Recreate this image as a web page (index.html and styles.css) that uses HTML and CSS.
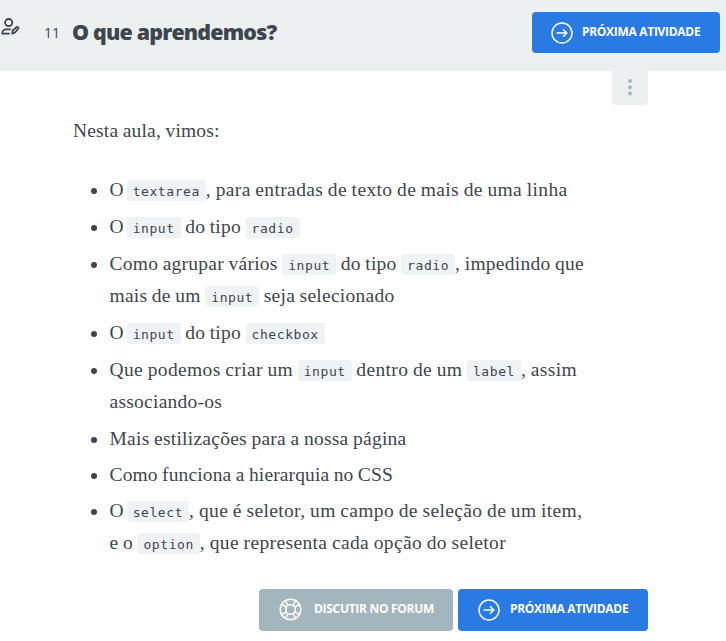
FILE: index.html
```html
<!DOCTYPE html>
<html lang="pt-BR">
<head>
<meta charset="utf-8">
<title>O que aprendemos?</title>
<link rel="stylesheet" href="styles.css">
</head>
<body>
<header class="topbar">
  <svg class="user-icon" viewBox="0 0 20 18" fill="none" stroke="currentColor" stroke-width="1.8" stroke-linejoin="round"><circle cx="8.7" cy="4.6" r="3.6"/><path d="M9.7 15.6H2.3C2.3 13 3.8 11.3 6 11.3h4.8"/><path d="M12.2 15.6l.6-3.1 3.7-3.4q1.4-.5 2 1.1l-3.5 4.3z"/></svg>
  <span class="number">11</span>
  <h1>O que aprendemos?</h1>
  <a class="button button-top"><svg class="arrow" viewBox="0 0 22 22" fill="none" stroke="currentColor" stroke-width="1.5"><circle cx="11" cy="11" r="10"/><path d="M5.5 11h10.2M12 7.3l3.8 3.7-3.8 3.7"/></svg><span>PRÓXIMA ATIVIDADE</span></a>
</header>
<main class="content">
  <div class="options"><svg viewBox="0 0 6 18" fill="currentColor"><circle cx="3" cy="3" r="2"/><circle cx="3" cy="9.2" r="2"/><circle cx="3" cy="15.4" r="2"/></svg></div>
  <p class="intro">Nesta aula, vimos:</p>
  <ul class="topics">
    <li class="coded"><span class="article">O </span><code>textarea</code><span class="wide">, para entradas de texto de mais de uma linha</span></li>
    <li class="coded"><span class="article">O </span><code>input</code> do tipo <code>radio</code></li>
    <li class="coded">Como agrupar vários <code>input</code> do tipo <code>radio</code>, impedindo que<br>mais de um <code>input</code> seja selecionado</li>
    <li class="coded"><span class="article">O </span><code>input</code> do tipo <code>checkbox</code></li>
    <li class="coded"><span class="wide">Que podemos criar um </span><code>input</code><span class="wide"> dentro de um </span><code>label</code><span class="wide">, assim</span><br>associando-os</li>
    <li>Mais estilizações para a nossa página</li>
    <li class="tight">Como funciona a hierarquia no CSS</li>
    <li class="coded"><span class="article">O </span><code>select</code><span class="wide">, que é seletor, um campo de seleção de um item,</span><br>e o <code>option</code><span class="wide">, que representa cada opção do seletor</span></li>
  </ul>
  <div class="actions">
    <a class="button forum"><svg class="ring" viewBox="0 0 24 24" fill="none" stroke="currentColor" stroke-width="1.6"><circle cx="12" cy="12" r="10.7"/><circle cx="12" cy="12" r="5"/><path d="M3.2 6.8l4.4 2.7M6.8 3.2l2.7 4.4M17.2 3.2l-2.7 4.4M20.8 6.8l-4.4 2.7M20.8 17.2l-4.4-2.7M17.2 20.8l-2.7-4.4M6.8 20.8l2.7-4.4M3.2 17.2l4.4-2.7"/></svg><span>DISCUTIR NO FORUM</span></a>
    <a class="button next"><svg class="arrow" viewBox="0 0 22 22" fill="none" stroke="currentColor" stroke-width="1.5"><circle cx="11" cy="11" r="10"/><path d="M5.5 11h10.2M12 7.3l3.8 3.7-3.8 3.7"/></svg><span>PRÓXIMA ATIVIDADE</span></a>
  </div>
</main>
</body>
</html>
```
FILE: styles.css
```css
* { box-sizing: border-box; }
body { margin: 0; height: 641px; overflow: hidden; background: #fff; color: #3d464d; font-family: "Open Sans", sans-serif; }
.topbar { display: flex; align-items: flex-start; height: 71px; background: #ecf0f1; }
.user-icon { width: 20px; height: 18px; margin-top: 18px; flex: none; }
.number { width: 29px; margin: 23px 0 0 24px; font-size: 14px; line-height: 20px; white-space: nowrap; }
h1 { margin: 16px 0 0 -1px; font-size: 21.4px; line-height: 32px; font-weight: 800; letter-spacing: -0.8px; white-space: nowrap; }
.button { display: flex; align-items: center; border-radius: 4px; color: #fff; background: #2a7ae4; font-size: 12px; line-height: 16px; font-weight: 700; letter-spacing: -0.3px; white-space: nowrap; }
.button span { position: relative; top: -1px; }
.button-top { width: 188px; height: 41px; margin: 12px 6px 0 auto; padding-left: 19px; gap: 9px; }
.arrow { width: 22px; height: 22px; flex: none; }
.content { width: 575px; margin-left: 73px; }
.options { display: flex; justify-content: center; align-items: center; width: 36px; height: 34px; margin-left: auto; padding-bottom: 2px; border-radius: 0 0 4px 4px; background: #ecf0f1; color: #a3b6be; }
.options svg { width: 6px; height: 18px; }
.intro { margin: 10px 0 0; font: 19.5px/32px "Source Serif Pro", "Liberation Serif", serif; letter-spacing: 0.18px; word-spacing: -0.6px; }
.topics { margin: 27px 0 0; padding: 0 0 0 36.5px; list-style: none; font: 19.5px/32.4px "Source Serif Pro", "Liberation Serif", serif; letter-spacing: 0.25px; word-spacing: -0.6px; white-space: nowrap; }
.topics li { margin-bottom: 3.6px; }
.topics li::before { content: ""; float: left; width: 6px; height: 6px; margin: 14px 0 0 -18.5px; border-radius: 50%; background: #3d464d; }
.topics .coded { margin-bottom: 4.4px; }
.article { letter-spacing: -0.6px; }
.wide { letter-spacing: 0.36px; }
.tight { letter-spacing: 0.13px; }
code { display: inline-block; height: 21px; padding: 0 6px; border-radius: 3px; background: #eff3f6; font: 13px/23px "DejaVu Sans Mono", monospace; letter-spacing: 0.57px; vertical-align: 0; margin: -4px 0; }
.actions { display: flex; justify-content: flex-end; gap: 5px; margin-top: 29px; }
.actions .button { height: 42px; }
.forum { width: 194px; padding-left: 20px; gap: 12px; background: #a3b6be; }
.ring { width: 23px; height: 23px; flex: none; }
.next { width: 190px; padding-left: 20px; gap: 10px; }
```
